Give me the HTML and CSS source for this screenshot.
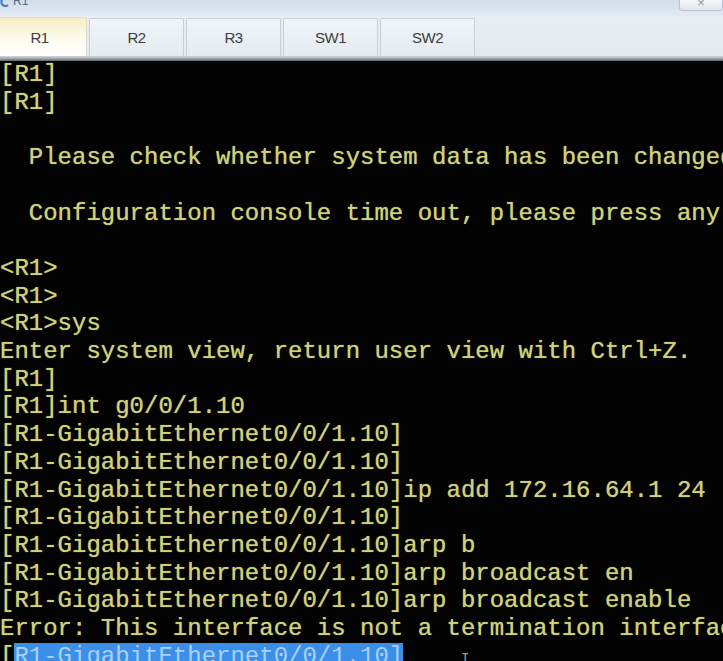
FILE: index.html
```html
<!DOCTYPE html>
<html lang="en">
<head>
  <meta charset="UTF-8" />
  <meta name="viewport" content="width=device-width, initial-scale=1.0"/>
  <title>R1</title>
  <link rel="stylesheet" href="styles.css">
</head>
<body>
  <div class="window">
    <div class="titlebar">
      <svg class="app-icon" width="10" height="10" viewBox="0 0 10 10">
        <path d="M8 2 A4 4 0 1 0 8 8" fill="none" stroke="#3f7fc8" stroke-width="2.2"/>
      </svg>
      <span class="title">R1</span>
      <div class="win-btn"><span>&times;</span></div>
    </div>
    <div class="tabbar">
      <div class="tab active">R1</div>
      <div class="tab">R2</div>
      <div class="tab">R3</div>
      <div class="tab">SW1</div>
      <div class="tab">SW2</div>
    </div>
    <div class="tabbar-edge"></div>
<pre class="terminal">[R1]
[R1]

  Please check whether system data has been changed, and save data in time

  Configuration console time out, please press any key to log on

&lt;R1&gt;
&lt;R1&gt;
&lt;R1&gt;sys
Enter system view, return user view with Ctrl+Z.
[R1]
[R1]int g0/0/1.10
[R1-GigabitEthernet0/0/1.10]
[R1-GigabitEthernet0/0/1.10]
[R1-GigabitEthernet0/0/1.10]ip add 172.16.64.1 24
[R1-GigabitEthernet0/0/1.10]
[R1-GigabitEthernet0/0/1.10]arp b
[R1-GigabitEthernet0/0/1.10]arp broadcast en
[R1-GigabitEthernet0/0/1.10]arp broadcast enable
Error: This interface is not a termination interface
[<span class="selected">R1-GigabitEthernet0/0/1.10]</span>    <span class="mouse">I</span></pre>
  </div>
</body>
</html>
```

FILE: styles.css
```css
body {
  margin: 0;
  background: #000;
  overflow: hidden;
}
.window {
  width: 723px;
  height: 661px;
  display: flex;
  flex-direction: column;
  overflow: hidden;
}
.titlebar {
  height: 16px;
  display: flex;
  align-items: flex-start;
  background: linear-gradient(#d3dde9, #e3eaf2);
  overflow: hidden;
}
.app-icon {
  margin: -3px 0 0 0;
}
.title {
  font-family: "Liberation Sans", Arial, sans-serif;
  font-size: 12px;
  line-height: 12px;
  margin: -5px 0 0 3px;
  color: #4f6a8e;
}
.win-btn {
  margin-left: auto;
  width: 42px;
  height: 11px;
  margin-top: -2px;
  border: 1px solid #b9c2cc;
  border-radius: 0 0 3px 3px;
  background: linear-gradient(#f6f8fb, #e1e6ec);
  display: flex;
  justify-content: center;
  overflow: hidden;
}
.win-btn span {
  font-family: "Liberation Sans", Arial, sans-serif;
  font-size: 13px;
  line-height: 8px;
  color: #8a939e;
}
.tabbar {
  height: 40px;
  display: flex;
  align-items: flex-end;
  margin-left: -8px;
  background: linear-gradient(#e9eef4, #e4e9f0);
}
.tab {
  width: 95px;
  height: 38px;
  margin-right: 2px;
  box-sizing: border-box;
  display: flex;
  align-items: center;
  justify-content: center;
  font-family: "Liberation Sans", Arial, sans-serif;
  font-size: 15px;
  letter-spacing: -0.5px;
  color: #3a3d42;
  background: linear-gradient(#f1f4f8, #e6ebf1);
  border: 1px solid #c7ced6;
  border-bottom: none;
  border-radius: 2px 2px 0 0;
}
.tab.active {
  height: 39px;
  background: linear-gradient(#f8ecc0, #fdf9ea 45%, #ffffff);
  border-color: #e0dccd;
}
.tabbar-edge {
  height: 5px;
  background: linear-gradient(#d4d8dd, #9a9fa5 60%, #5c6066);
}
.terminal {
  flex: 1;
  margin: 0;
  padding: 0;
  background: #030303;
  color: #cfd27a;
  font-family: "Courier New", "Nimbus Mono PS", "FreeMono", "Liberation Mono", monospace;
  font-size: 24px;
  line-height: 27.7px;
  white-space: pre;
  overflow: hidden;
  text-shadow: 0 0 1px rgba(207, 210, 122, 0.8);
}
.selected {
  background: #3b8fe8;
  color: #a9d2ff;
  text-shadow: none;
}
.mouse {
  font-size: 14px;
  color: #9a9a9a;
  text-shadow: none;
}
```
